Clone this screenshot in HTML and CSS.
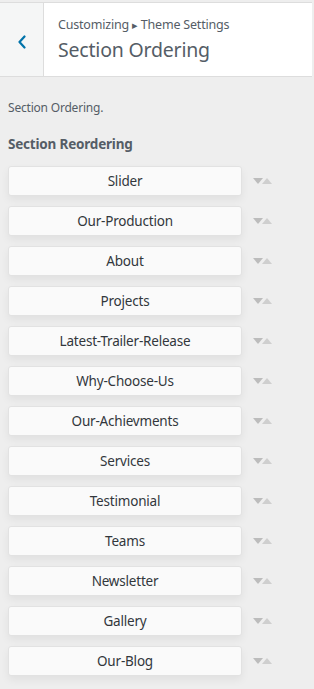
FILE: index.html
```html
<!DOCTYPE html>
<html>
<head>
<meta charset="utf-8">
<link rel="stylesheet" href="styles.css">
</head>
<body>
<div class="panel">
  <div class="header">
    <button class="back" aria-label="Back">
      <svg width="10" height="14" viewBox="0 0 10 14"><path d="M7.5 1.5 L2.5 7 L7.5 12.5" fill="none" stroke="#0073aa" stroke-width="2.2" stroke-linecap="round" stroke-linejoin="round"/></svg>
    </button>
    <div class="titles">
      <div class="crumb">Customizing <span class="tri">&#9656;</span> Theme Settings</div>
      <div class="title">Section Ordering</div>
    </div>
  </div>
  <div class="content">
    <p class="desc">Section Ordering.</p>
    <h3 class="label">Section Reordering</h3>
    <ul class="list">
      <li class="row"><span class="item">Slider</span><span class="arrows"><i class="down"></i><i class="up"></i></span></li>
      <li class="row"><span class="item">Our-Production</span><span class="arrows"><i class="down"></i><i class="up"></i></span></li>
      <li class="row"><span class="item">About</span><span class="arrows"><i class="down"></i><i class="up"></i></span></li>
      <li class="row"><span class="item">Projects</span><span class="arrows"><i class="down"></i><i class="up"></i></span></li>
      <li class="row"><span class="item">Latest-Trailer-Release</span><span class="arrows"><i class="down"></i><i class="up"></i></span></li>
      <li class="row"><span class="item">Why-Choose-Us</span><span class="arrows"><i class="down"></i><i class="up"></i></span></li>
      <li class="row"><span class="item">Our-Achievments</span><span class="arrows"><i class="down"></i><i class="up"></i></span></li>
      <li class="row"><span class="item">Services</span><span class="arrows"><i class="down"></i><i class="up"></i></span></li>
      <li class="row"><span class="item">Testimonial</span><span class="arrows"><i class="down"></i><i class="up"></i></span></li>
      <li class="row"><span class="item">Teams</span><span class="arrows"><i class="down"></i><i class="up"></i></span></li>
      <li class="row"><span class="item">Newsletter</span><span class="arrows"><i class="down"></i><i class="up"></i></span></li>
      <li class="row"><span class="item">Gallery</span><span class="arrows"><i class="down"></i><i class="up"></i></span></li>
      <li class="row"><span class="item">Our-Blog</span><span class="arrows"><i class="down"></i><i class="up"></i></span></li>
    </ul>
  </div>
</div>
</body>
</html>
```
FILE: styles.css
```css
* { box-sizing: border-box; }
html, body { margin: 0; padding: 0; }
body {
  background: #eee;
  font-family: "Noto Sans", "Open Sans", sans-serif;
  color: #555d66;
  height: 689px;
  overflow: hidden;
}
.panel {
  width: 312px;
  padding-top: 2px;
}
.header {
  display: flex;
  height: 75px;
  background: #fff;
  border-top: 1px solid #ddd;
  border-bottom: 1px solid #ddd;
}
.back {
  width: 44px;
  flex: none;
  border: 0;
  border-right: 1px solid #ddd;
  background: #f5f6f6;
  display: flex;
  align-items: center;
  justify-content: center;
  padding: 0;
  padding-top: 4px;
}
.titles {
  padding: 13px 0 0 14px;
}
.crumb {
  font-size: 12.5px;
  line-height: 18px;
  color: #555d66;
  letter-spacing: -0.2px;
}
.tri { font-size: 11px; }
.title {
  font-size: 19.5px;
  line-height: 28px;
  margin-top: 2px;
  color: #555d66;
  letter-spacing: -0.2px;
}
.content {
  padding: 22px 0 0 8px;
}
.desc {
  margin: 0;
  font-size: 12px;
  line-height: 18px;
  color: #555d66;
  letter-spacing: -0.2px;
}
.label {
  margin: 17px 0 0;
  font-size: 13.5px;
  line-height: 20px;
  font-weight: bold;
  color: #555d66;
  letter-spacing: -0.2px;
}
.list {
  list-style: none;
  margin: 12px 0 0;
  padding: 0;
  display: flex;
  flex-direction: column;
  gap: 10px;
}
.row {
  display: flex;
  align-items: center;
}
.item {
  width: 234px;
  height: 30px;
  background: #fafafa;
  border: 1px solid #e2e2e2;
  border-radius: 3px;
  box-shadow: 0 4px 8px rgba(0,0,0,0.06);
  display: flex;
  align-items: center;
  justify-content: center;
  font-size: 13.5px;
  color: #32373c;
  letter-spacing: -0.2px;
}
.arrows {
  display: flex;
  margin-left: 11px;
  margin-top: -1px;
}
.down {
  width: 0; height: 0;
  border-left: 5px solid transparent;
  border-right: 5px solid transparent;
  border-top: 6px solid #bcbcbc;
}
.up {
  width: 0; height: 0;
  margin-left: -1px;
  border-left: 5px solid transparent;
  border-right: 5px solid transparent;
  border-bottom: 6px solid #cfcfcf;
}
```
